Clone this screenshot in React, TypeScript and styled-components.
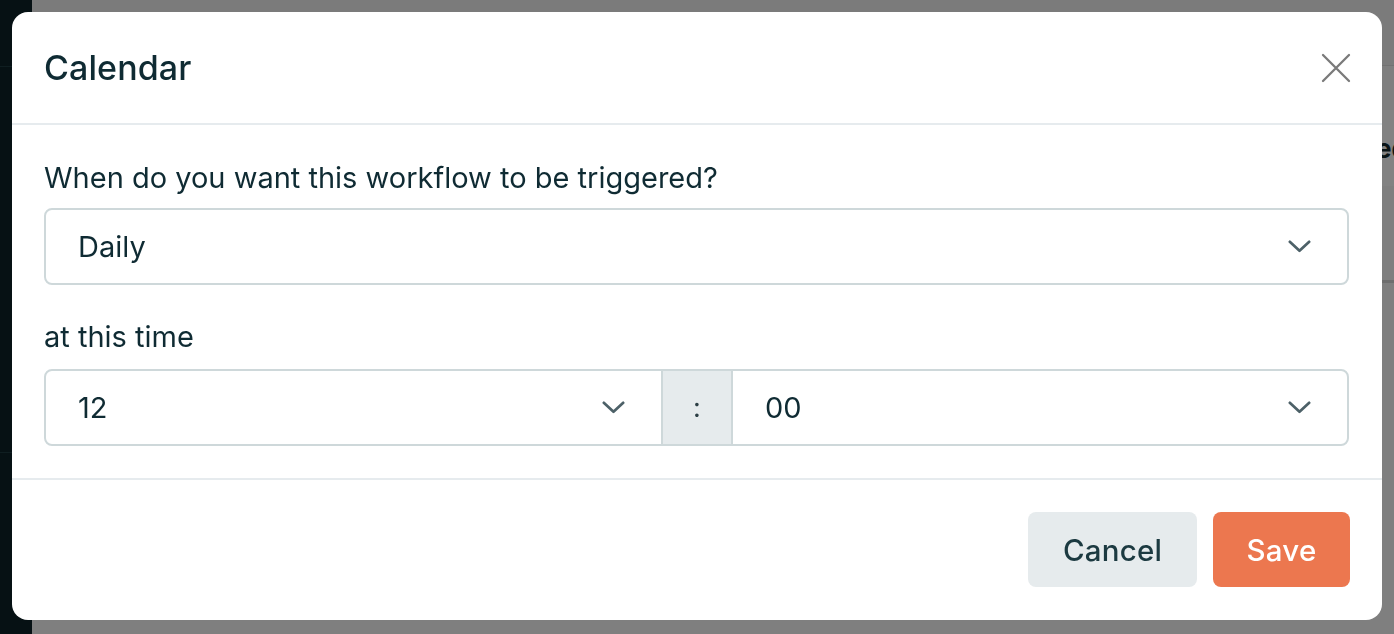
import React from "react";
import styled, { createGlobalStyle } from "styled-components";

const Global = createGlobalStyle`
  html, body { margin: 0; padding: 0; }
  body {
    width: 1394px;
    height: 634px;
    overflow: hidden;
    font-family: Inter, "Noto Sans", sans-serif;
    background: #7f7f7f;
  }
  * { box-sizing: border-box; }
`;

const Page = styled.div`
  display: flex;
  width: 1394px;
  height: 634px;
`;

const Sidebar = styled.aside`
  width: 32px;
  flex: none;
  background: #061114;
  display: flex;
  flex-direction: column;
`;

const SideRule = styled.div<{ $gap: number }>`
  margin-top: ${(p) => p.$gap}px;
  height: 1px;
  background: #0f1e21;
`;

const Main = styled.main`
  flex: 1;
  display: flex;
  flex-direction: column;
  background: #7f7f7f;
`;

const MainTop = styled.div`
  height: 66px;
  background: #7b7b7b;
  border-bottom: 1px solid #727272;
`;

const MainHeading = styled.div`
  margin-top: 44px;
  height: 76px;
  display: flex;
  align-items: center;
  justify-content: flex-end;
  background: #828282;
  font: 700 26px Inter, sans-serif;
  color: #0a1416;
  margin-right: -14px;
  overflow: hidden;
`;

const MainRule = styled.div`
  margin-top: 94px;
  height: 3px;
  background: #6e6e6e;
`;

const Overlay = styled.div`
  position: fixed;
  inset: 0;
  display: flex;
  padding: 12px 12px 14px 12px;
`;

const Modal = styled.div`
  width: 1370px;
  height: 608px;
  background: #ffffff;
  border-radius: 16px;
  display: flex;
  flex-direction: column;
  color: #0f2b33;
  overflow: hidden;
`;

const Header = styled.header`
  height: 113px;
  flex: none;
  display: flex;
  align-items: center;
  justify-content: space-between;
  padding: 0 32px;
  border-bottom: 2px solid #e6ebee;
`;

const Title = styled.h2`
  margin: 0;
  font-size: 34px;
  font-weight: 500;
  letter-spacing: 0.1px;
  color: #0f2b33;
`;

const CloseButton = styled.button`
  width: 36px;
  height: 36px;
  border: none;
  background: transparent;
  padding: 0;
  display: flex;
  align-items: center;
  justify-content: center;
  margin-right: -4px;
  color: #7a7a7a;
  cursor: pointer;
`;

const Body = styled.section`
  flex: none;
  padding: 35px 33px 0 32px;
  height: 355px;
  border-bottom: 2px solid #e6ebee;
  display: flex;
  flex-direction: column;
`;

const Label = styled.div<{ $mt?: number; $mb: number }>`
  font-size: 29px;
  line-height: 36px;
  font-weight: 400;
  color: #0f2b33;
  margin-top: ${(p) => p.$mt ?? 0}px;
  margin-bottom: ${(p) => p.$mb}px;
`;

const SelectBox = styled.div`
  height: 77px;
  flex: none;
  border: 2px solid #ced8da;
  border-radius: 8px;
  display: flex;
  align-items: center;
  justify-content: space-between;
  padding: 0 36px 0 32px;
  font-size: 29px;
  color: #0f2b33;
`;

const TimeRow = styled.div`
  height: 77px;
  flex: none;
  border: 2px solid #ced8da;
  border-radius: 8px;
  display: grid;
  grid-template-columns: 615px 72px 1fr;
  overflow: hidden;
`;

const TimeCell = styled.div`
  display: flex;
  align-items: center;
  justify-content: space-between;
  padding: 0 36px 0 32px;
  font-size: 29px;
  color: #0f2b33;
`;

const Separator = styled.div`
  background: #e6ebed;
  border-left: 2px solid #ced8da;
  border-right: 2px solid #ced8da;
  display: flex;
  align-items: center;
  justify-content: center;
  font-size: 27px;
  color: #2b3e44;
`;

const Footer = styled.footer`
  flex: 1;
  display: flex;
  justify-content: flex-end;
  align-items: flex-start;
  gap: 16px;
  padding: 32px 32px 0 0;
`;

const Button = styled.button<{ $primary?: boolean }>`
  height: 75px;
  width: ${(p) => (p.$primary ? "137px" : "169px")};
  padding: 0;
  border: none;
  border-radius: 8px;
  font-family: Inter, sans-serif;
  font-size: 29.5px;
  font-weight: 500;
  letter-spacing: 0.2px;
  background: ${(p) => (p.$primary ? "#ec774f" : "#e6ebed")};
  color: ${(p) => (p.$primary ? "#ffffff" : "#1c3a41")};
  cursor: pointer;
`;

const Chevron = () => (
  <svg width="23" height="13" viewBox="0 0 23 13" fill="none">
    <path d="M1.8 1.8 L11.5 10.8 L21.2 1.8" stroke="#4d6168" strokeWidth="2.7" strokeLinecap="round" strokeLinejoin="round" />
  </svg>
);

const CloseIcon = () => (
  <svg width="30" height="30" viewBox="0 0 30 30" fill="none">
    <path d="M2 2 L28 28 M28 2 L2 28" stroke="currentColor" strokeWidth="2.3" strokeLinecap="round" />
  </svg>
);

export default function App() {
  return (
    <>
      <Global />
      <Page>
        <Sidebar>
          <SideRule $gap={66} />
          <SideRule $gap={385} />
        </Sidebar>
        <Main>
          <MainTop />
          <MainHeading>Triggered</MainHeading>
          <MainRule />
        </Main>
      </Page>
      <Overlay>
        <Modal role="dialog" aria-label="Calendar">
          <Header>
            <Title>Calendar</Title>
            <CloseButton aria-label="Close">
              <CloseIcon />
            </CloseButton>
          </Header>
          <Body>
            <Label $mb={12}>When do you want this workflow to be triggered?</Label>
            <SelectBox>
              <span>Daily</span>
              <Chevron />
            </SelectBox>
            <Label $mt={34} $mb={14}>at this time</Label>
            <TimeRow>
              <TimeCell>
                <span>12</span>
                <Chevron />
              </TimeCell>
              <Separator>:</Separator>
              <TimeCell>
                <span>00</span>
                <Chevron />
              </TimeCell>
            </TimeRow>
          </Body>
          <Footer>
            <Button>Cancel</Button>
            <Button $primary>Save</Button>
          </Footer>
        </Modal>
      </Overlay>
    </>
  );
}
